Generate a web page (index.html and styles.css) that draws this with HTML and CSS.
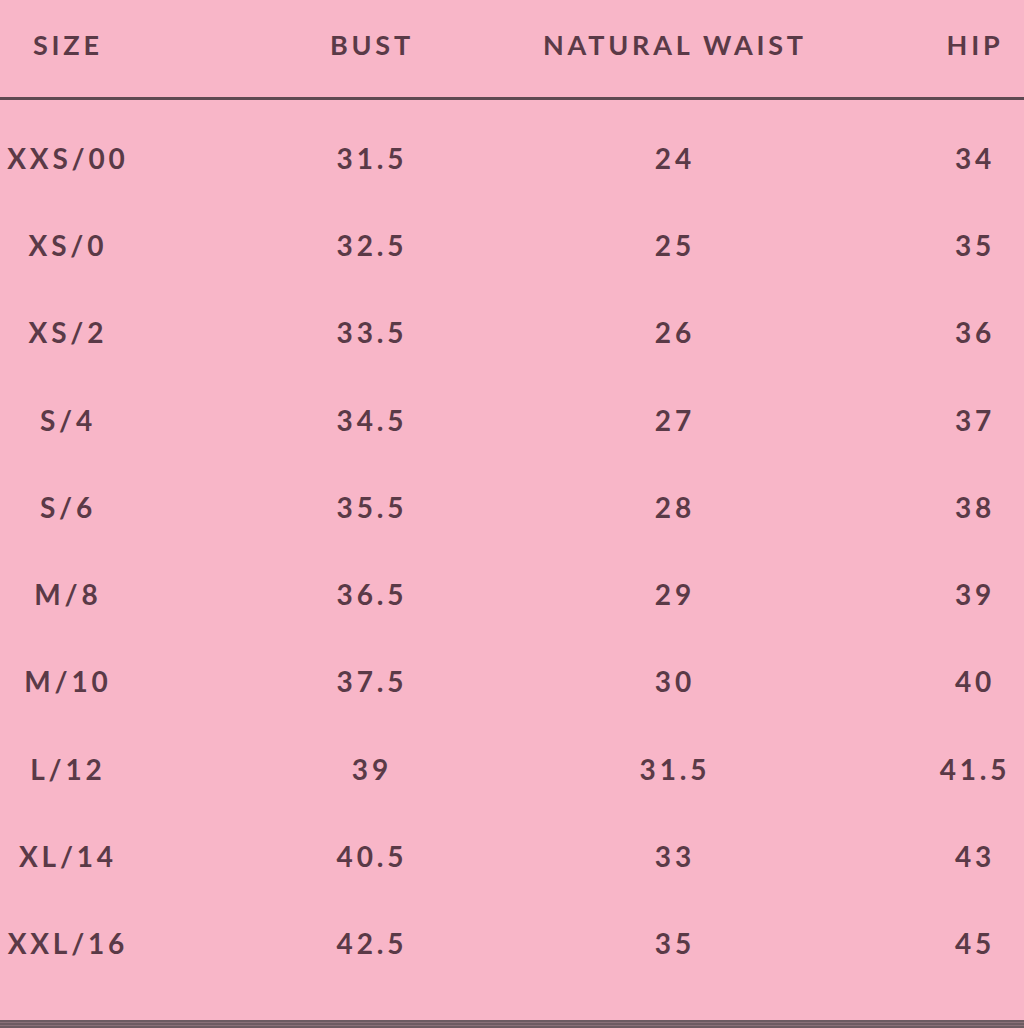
FILE: index.html
```html
<!DOCTYPE html>
<html>
<head>
<meta charset="utf-8">
<link rel="stylesheet" href="styles.css">
</head>
<body>
<div class="chart">
  <div class="row head">
    <div class="cell c1">SIZE</div>
    <div class="cell c2">BUST</div>
    <div class="cell c3">NATURAL WAIST</div>
    <div class="cell c4">HIP</div>
  </div>
  <div class="body">
    <div class="row"><div class="cell c1">XXS/00</div><div class="cell c2">31.5</div><div class="cell c3">24</div><div class="cell c4">34</div></div>
    <div class="row"><div class="cell c1">XS/0</div><div class="cell c2">32.5</div><div class="cell c3">25</div><div class="cell c4">35</div></div>
    <div class="row"><div class="cell c1">XS/2</div><div class="cell c2">33.5</div><div class="cell c3">26</div><div class="cell c4">36</div></div>
    <div class="row"><div class="cell c1">S/4</div><div class="cell c2">34.5</div><div class="cell c3">27</div><div class="cell c4">37</div></div>
    <div class="row"><div class="cell c1">S/6</div><div class="cell c2">35.5</div><div class="cell c3">28</div><div class="cell c4">38</div></div>
    <div class="row"><div class="cell c1">M/8</div><div class="cell c2">36.5</div><div class="cell c3">29</div><div class="cell c4">39</div></div>
    <div class="row"><div class="cell c1">M/10</div><div class="cell c2">37.5</div><div class="cell c3">30</div><div class="cell c4">40</div></div>
    <div class="row"><div class="cell c1">L/12</div><div class="cell c2">39</div><div class="cell c3">31.5</div><div class="cell c4">41.5</div></div>
    <div class="row"><div class="cell c1">XL/14</div><div class="cell c2">40.5</div><div class="cell c3">33</div><div class="cell c4">43</div></div>
    <div class="row"><div class="cell c1">XXL/16</div><div class="cell c2">42.5</div><div class="cell c3">35</div><div class="cell c4">45</div></div>
  </div>
  <div class="bottom-rule"></div>
</div>
</body>
</html>
```
FILE: styles.css
```css
html, body {
  margin: 0;
  padding: 0;
  background: #f8b6c8;
}
body {
  width: 1024px;
  height: 1028px;
  overflow: hidden;
  font-family: "Lato", "DejaVu Sans", sans-serif;
  font-weight: 700;
  color: #5a3a47;
}
.chart {
  display: flex;
  flex-direction: column;
  height: 1028px;
}
.row {
  display: grid;
  grid-template-columns: 132px 476px 130px 286px;
  align-items: center;
  height: 87.3px;
}
.head {
  height: 89px;
  padding-bottom: 8px;
  border-bottom: 3px solid #5e4a52;
  box-sizing: content-box;
}
.cell {
  display: flex;
  justify-content: center;
  white-space: nowrap;
  font-size: 28px;
  letter-spacing: 3.8px;
  padding-left: 3.8px;
}
.head .cell {
  font-size: 27px;
}
.c4 {
  width: 98px;
  justify-self: end;
}
.body {
  padding-top: 14px;
  flex: 1;
}
.bottom-rule {
  height: 8px;
  background: repeating-linear-gradient(to bottom, #6d5b62 0, #6d5b62 2px, #8a7078 2px, #8a7078 3px);
}
```
